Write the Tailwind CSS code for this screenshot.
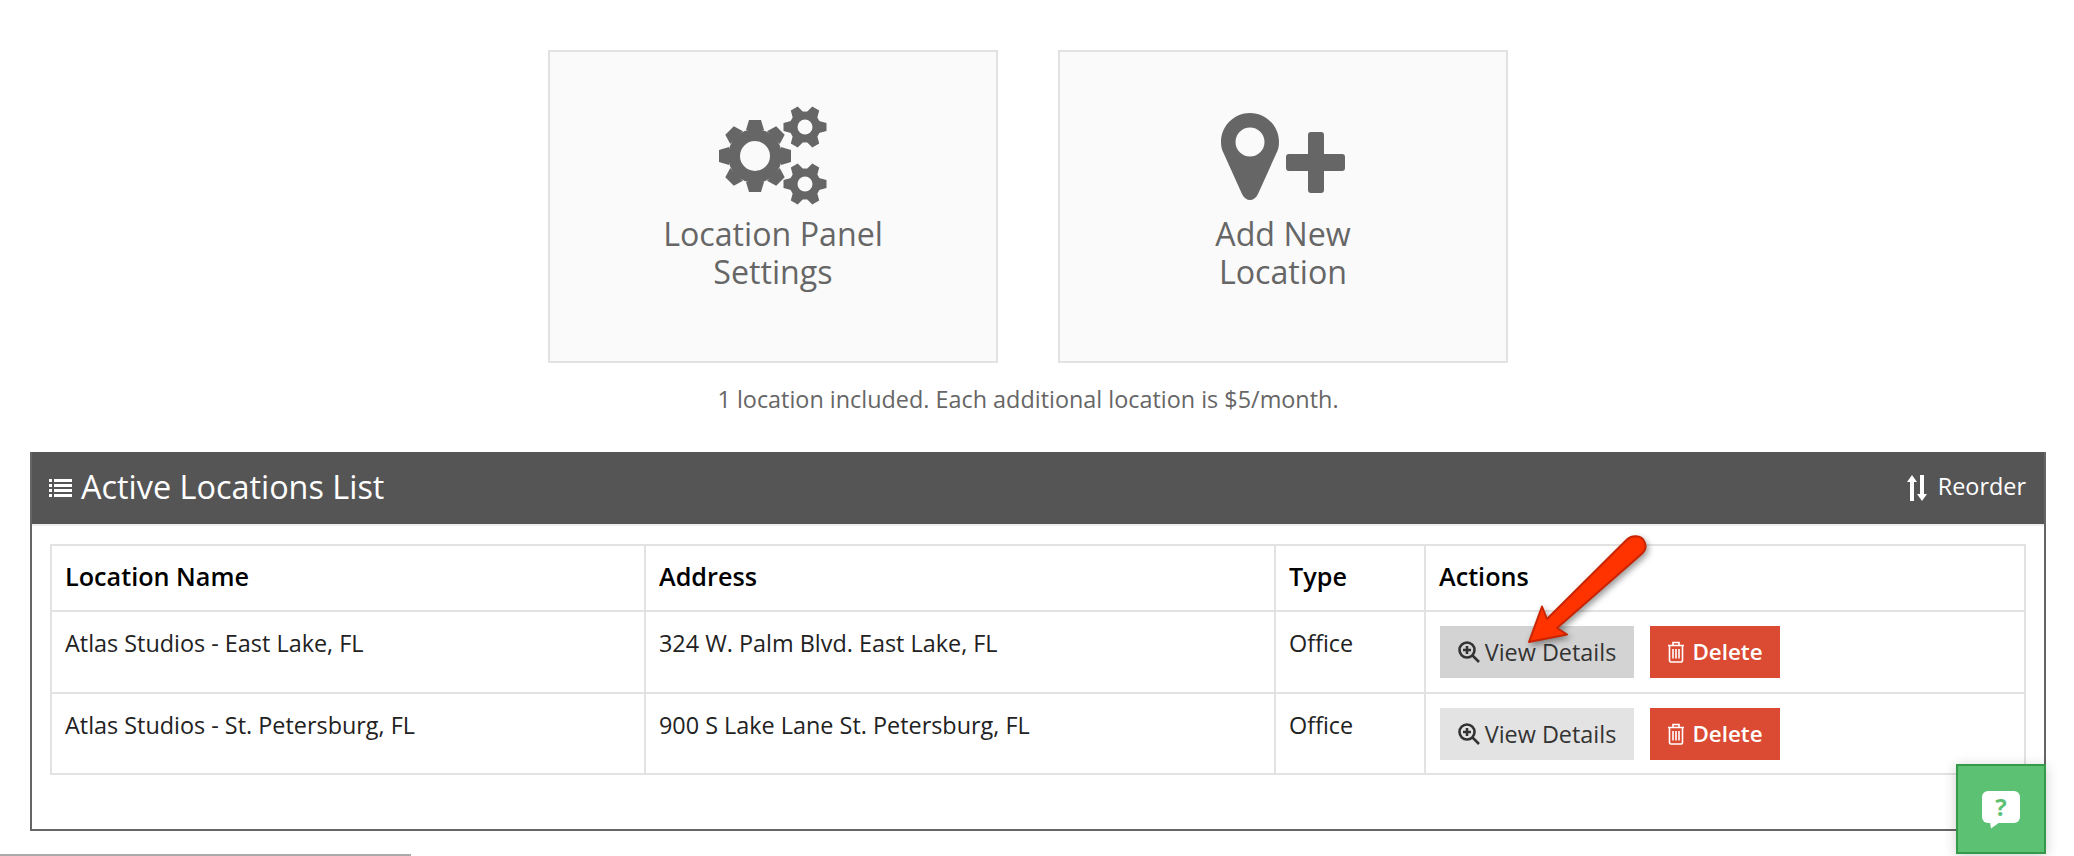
<!DOCTYPE html>
<html lang="en">
<head>
    <meta charset="UTF-8">
    <title>Locations</title>
    <script src="https://cdn.jsdelivr.net/npm/@tailwindcss/browser@4"></script>
</head>
<body class="relative h-[856px] overflow-hidden bg-white font-['Open_Sans',sans-serif] text-[#333]">

<div class="pt-[50px]">
    <!-- top cards -->
    <div class="flex justify-center gap-[60px] pr-[18px]">
        <div class="w-[450px] h-[313px] border-2 border-[#e2e2e2] bg-[#fafafa] flex flex-col items-center pt-[54px] text-[#666]">
            <svg width="110" height="100" viewBox="0 0 110 100" class="block" fill="#666">
                <g transform="translate(37 50)">
                    <circle r="27"/>
                    <polygon points="-9,-26 -6,-36 6,-36 9,-26"/>
                    <polygon points="-9,-26 -6,-36 6,-36 9,-26" transform="rotate(45)"/>
                    <polygon points="-9,-26 -6,-36 6,-36 9,-26" transform="rotate(90)"/>
                    <polygon points="-9,-26 -6,-36 6,-36 9,-26" transform="rotate(135)"/>
                    <polygon points="-9,-26 -6,-36 6,-36 9,-26" transform="rotate(180)"/>
                    <polygon points="-9,-26 -6,-36 6,-36 9,-26" transform="rotate(225)"/>
                    <polygon points="-9,-26 -6,-36 6,-36 9,-26" transform="rotate(270)"/>
                    <polygon points="-9,-26 -6,-36 6,-36 9,-26" transform="rotate(315)"/>
                    <circle r="15" fill="#fafafa"/>
                </g>
                <g transform="translate(87 21)">
                    <circle r="15.5"/>
                    <polygon points="-6,-14 -4,-21.5 4,-21.5 6,-14" transform="rotate(30)"/>
                    <polygon points="-6,-14 -4,-21.5 4,-21.5 6,-14" transform="rotate(90)"/>
                    <polygon points="-6,-14 -4,-21.5 4,-21.5 6,-14" transform="rotate(150)"/>
                    <polygon points="-6,-14 -4,-21.5 4,-21.5 6,-14" transform="rotate(210)"/>
                    <polygon points="-6,-14 -4,-21.5 4,-21.5 6,-14" transform="rotate(270)"/>
                    <polygon points="-6,-14 -4,-21.5 4,-21.5 6,-14" transform="rotate(330)"/>
                    <circle r="7.5" fill="#fafafa"/>
                </g>
                <g transform="translate(87 78)">
                    <circle r="15.5"/>
                    <polygon points="-6,-14 -4,-21.5 4,-21.5 6,-14" transform="rotate(30)"/>
                    <polygon points="-6,-14 -4,-21.5 4,-21.5 6,-14" transform="rotate(90)"/>
                    <polygon points="-6,-14 -4,-21.5 4,-21.5 6,-14" transform="rotate(150)"/>
                    <polygon points="-6,-14 -4,-21.5 4,-21.5 6,-14" transform="rotate(210)"/>
                    <polygon points="-6,-14 -4,-21.5 4,-21.5 6,-14" transform="rotate(270)"/>
                    <polygon points="-6,-14 -4,-21.5 4,-21.5 6,-14" transform="rotate(330)"/>
                    <circle r="7.5" fill="#fafafa"/>
                </g>
            </svg>
            <div class="text-[32.2px] leading-[38px] font-[370] text-center mt-[9px]">Location Panel<br>Settings</div>
        </div>
        <div class="w-[450px] h-[313px] border-2 border-[#e2e2e2] bg-[#fafafa] flex flex-col items-center pt-[54px] text-[#666]">
            <svg width="124" height="100" viewBox="0 0 124 100" class="block" fill="#666">
                <path fill-rule="evenodd" d="M29 7C13 7 0 20 0 36c0 5 1 8 3 12l18 40c2 4 5 6 8 6s6-2 8-6l18-40c2-4 3-7 3-12C58 20 45 7 29 7zm0 14.500a14.500 14.500 0 1 1 0 29 14.500 14.500 0 0 1 0-29z"/>
                <path d="M90 26h10a3 3 0 0 1 3 3v19h18a3 3 0 0 1 3 3v11a3 3 0 0 1-3 3h-18v19a3 3 0 0 1-3 3H90a3 3 0 0 1-3-3V65H68a3 3 0 0 1-3-3V51a3 3 0 0 1 3-3h19V29a3 3 0 0 1 3-3z"/>
            </svg>
            <div class="text-[32.2px] leading-[38px] font-[370] text-center mt-[9px]">Add New<br>Location</div>
        </div>
    </div>

    <p class="text-center text-[23.4px] leading-[36px] font-normal text-[#666] mt-[18px] pr-[18px]">1 location included. Each additional location is $5/month.</p>

    <!-- panel -->
    <div class="ml-[30px] mr-[28px] mt-[35px] h-[379px] border-2 border-t-0 border-[#666]">
        <div class="h-[72px] bg-[#555] flex items-center justify-between pl-[17px] pr-[18px] text-white">
            <div class="flex items-center gap-[9px]">
                <svg width="23" height="20" viewBox="0 0 23 20" fill="#fff">
                    <rect x="0" y="1" width="3" height="3"/><rect x="5" y="1" width="18" height="3"/>
                    <rect x="0" y="6" width="3" height="3"/><rect x="5" y="6" width="18" height="3"/>
                    <rect x="0" y="11" width="3" height="3"/><rect x="5" y="11" width="18" height="3"/>
                    <rect x="0" y="16" width="3" height="3"/><rect x="5" y="16" width="18" height="3"/>
                </svg>
                <span class="text-[32.4px] leading-[40px] font-normal pb-[4px]">Active Locations List</span>
            </div>
            <div class="flex items-center gap-[11px] text-[23.4px] font-normal">
                <svg width="20" height="26" viewBox="0 0 20 26" fill="#fff">
                    <path d="M5 0l5 7H7v19H3V7H0z"/>
                    <path d="M15 26l5-7h-3V0h-4v19h-3z"/>
                </svg>
                <span class="pb-[2px]">Reorder</span>
            </div>
        </div>
        <div class="h-[2px] bg-[#eee]"></div>

        <div class="pl-[18px] pt-[18px]">
            <table class="table-fixed border-collapse w-[1976px] text-[23.4px] leading-[36px] text-black">
                <thead>
                    <tr class="h-[66px] text-[25.2px] leading-[36px]">
                        <th class="w-[594px] border-2 border-[#e2e2e2] px-[13px] pb-[5px] text-left font-semibold">Location Name</th>
                        <th class="w-[630px] border-2 border-[#e2e2e2] px-[13px] pb-[5px] text-left font-semibold">Address</th>
                        <th class="w-[150px] border-2 border-[#e2e2e2] px-[13px] pb-[5px] text-left font-semibold">Type</th>
                        <th class="border-2 border-[#e2e2e2] px-[13px] pb-[5px] text-left font-semibold">Actions</th>
                    </tr>
                </thead>
                <tbody class="text-[#222]">
                    <tr class="h-[82px]">
                        <td class="border-2 border-[#e2e2e2] px-[13px] pt-[13px] pb-[13px] align-top">Atlas Studios - East Lake, FL</td>
                        <td class="border-2 border-[#e2e2e2] px-[13px] pt-[13px] pb-[13px] align-top">324 W. Palm Blvd. East Lake, FL</td>
                        <td class="border-2 border-[#e2e2e2] px-[13px] pt-[13px] pb-[13px] align-top">Office</td>
                        <td class="border-2 border-[#e2e2e2] px-[14px] pt-[14px] pb-[13px] align-top">
                            <div class="flex gap-[16px]">
                                <button class="w-[194px] h-[52px] bg-[#d3d3d3] text-[#333] flex items-center justify-center gap-[5px]">
                                    <svg width="22" height="22" viewBox="0 0 22 22" fill="none" stroke="#333" stroke-width="2.600"><circle cx="9" cy="9" r="7.500"/><path d="M14.500 14.500L21 21M5 9h8M9 5v8"/></svg>
                                    <span>View Details</span>
                                </button>
                                <button class="w-[130px] h-[52px] bg-[#db4a32] text-white text-[22.4px] font-semibold flex items-center justify-center gap-[7px]">
                                    <svg width="18" height="22" viewBox="0 0 18 22" fill="none" stroke="#fff" stroke-width="1.600"><path d="M1 4.500h16M6 4.500V1.500h6v3M2.500 4.500v15a1.500 1.500 0 0 0 1.500 1.500h10a1.500 1.500 0 0 0 1.500-1.500v-15M6 8v9.500M9 8v9.500M12 8v9.500"/></svg>
                                    <span>Delete</span>
                                </button>
                            </div>
                        </td>
                    </tr>
                    <tr class="h-[81px]">
                        <td class="border-2 border-[#e2e2e2] px-[13px] pt-[13px] pb-[13px] align-top">Atlas Studios - St. Petersburg, FL</td>
                        <td class="border-2 border-[#e2e2e2] px-[13px] pt-[13px] pb-[13px] align-top">900 S Lake Lane St. Petersburg, FL</td>
                        <td class="border-2 border-[#e2e2e2] px-[13px] pt-[13px] pb-[13px] align-top">Office</td>
                        <td class="border-2 border-[#e2e2e2] px-[14px] pt-[14px] pb-[13px] align-top">
                            <div class="flex gap-[16px]">
                                <button class="w-[194px] h-[52px] bg-[#e3e3e3] text-[#333] flex items-center justify-center gap-[5px]">
                                    <svg width="22" height="22" viewBox="0 0 22 22" fill="none" stroke="#333" stroke-width="2.600"><circle cx="9" cy="9" r="7.500"/><path d="M14.500 14.500L21 21M5 9h8M9 5v8"/></svg>
                                    <span>View Details</span>
                                </button>
                                <button class="w-[130px] h-[52px] bg-[#db4a32] text-white text-[22.4px] font-semibold flex items-center justify-center gap-[7px]">
                                    <svg width="18" height="22" viewBox="0 0 18 22" fill="none" stroke="#fff" stroke-width="1.600"><path d="M1 4.500h16M6 4.500V1.500h6v3M2.500 4.500v15a1.500 1.500 0 0 0 1.500 1.500h10a1.500 1.500 0 0 0 1.500-1.500v-15M6 8v9.500M9 8v9.500M12 8v9.500"/></svg>
                                    <span>Delete</span>
                                </button>
                            </div>
                        </td>
                    </tr>
                </tbody>
            </table>
        </div>
    </div>
</div>

<!-- annotation arrow drawn over the table -->
<svg class="absolute left-[1510px] top-[525px] drop-shadow-[2px_3px_3px_rgba(0,0,0,0.4)]" width="150" height="130" viewBox="1510 525 150 130">
    <path d="M1627 539.500C1632 535 1641 535 1644 541C1647 546 1645 551 1641 554.500L1557 628L1567 634.500L1529 642L1542 606.500L1547 619Z" fill="#ff3300" stroke="#c92400" stroke-width="2" stroke-linejoin="round"/>
</svg>

<!-- help widget -->
<div class="absolute left-[1956px] top-[764px] w-[90px] h-[90px] border-2 border-[#349a4a] bg-[#5dc174] shadow-[0_2px_12px_rgba(0,0,0,0.2)] flex items-center justify-center">
    <div class="relative w-[38px] h-[32px] mb-[4px] rounded-[6px] bg-white flex items-center justify-center text-[#5dc174] text-[24px] font-bold leading-none">?
        <svg class="absolute left-[8px] top-[31px]" width="10" height="7" viewBox="0 0 10 7" fill="#fff"><path d="M0 0h10L1 6.500z"/></svg>
    </div>
</div>

<!-- scrollbar sliver at the bottom edge -->
<div class="absolute left-0 bottom-0 w-[411px] h-[2px] bg-[#aaa]"></div>

</body>
</html>
